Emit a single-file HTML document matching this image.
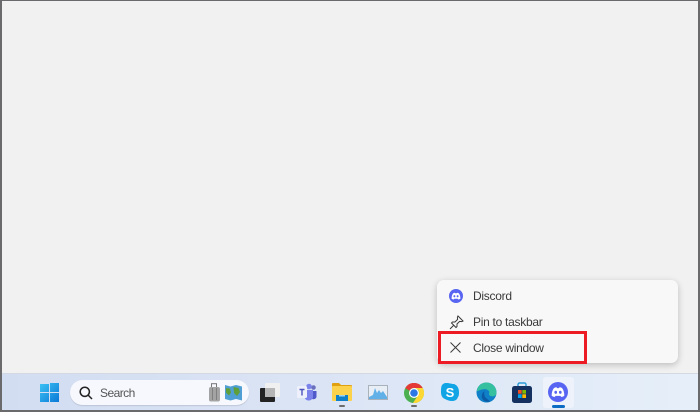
<!DOCTYPE html>
<html><head><meta charset="utf-8">
<style>
html,body{margin:0;padding:0;width:700px;height:412px;overflow:hidden;background:#f1f1f1}
body{position:relative;font-family:"Liberation Sans",sans-serif}
.a{position:absolute}
.t{position:absolute;font-size:12px;letter-spacing:-.28px;color:#3a3a3a;white-space:nowrap;left:473px}
#w{position:absolute;left:0;top:0;width:700px;height:412px;filter:blur(.35px)}
</style></head><body>
<div id="w">
<div class="a" style="left:0;top:373px;width:700px;height:38px;background:linear-gradient(90deg,#d3ddf2 0,#dbe5f5 50%,#e6eff9 100%);border-top:1px solid #d4d8e2;box-sizing:border-box"></div>

<!-- Context menu -->
<div class="a" style="left:437px;top:280px;width:241px;height:83px;background:#f8f8f8;border-radius:7px;box-shadow:0 2px 7px rgba(0,0,0,.22)"></div>
<svg class="a" style="left:449px;top:289px" width="14" height="14" viewBox="0 0 14 14"><circle cx="7" cy="7" r="7" fill="#5865f2"/><path d="M2.6 9.7C2.5 7.5 3.2 5.4 4.2 4.2Q5.3 3.7 6 3.7L6.3 4.3H7.7L8 3.7Q8.7 3.7 9.8 4.2C10.8 5.4 11.5 7.5 11.4 9.7Q10.4 10.4 9.3 10.5L8.7 9.7H5.3L4.7 10.5Q3.6 10.4 2.6 9.7Z" fill="#fff"/><ellipse cx="5.4" cy="7.2" rx=".95" ry="1.1" fill="#5865f2"/><ellipse cx="8.6" cy="7.2" rx=".95" ry="1.1" fill="#5865f2"/></svg>
<div class="t" style="top:289px">Discord</div>
<svg class="a" style="left:449px;top:315px" width="15" height="15" viewBox="0 0 15 15" fill="none" stroke="#3a3a3a" stroke-width="1"><path d="M9 1L14 6L12.8 6.6L10.6 6.4L8 9L8 11.5L7 12.5L2.5 8L3.5 7L6 7L8.6 4.4L8.4 2.2Z"/><path d="M4.6 10.4L1 14"/></svg>
<div class="t" style="top:315px">Pin to taskbar</div>
<svg class="a" style="left:450px;top:342px" width="11" height="11" viewBox="0 0 11 11" stroke="#3a3a3a" stroke-width="1"><path d="M.5.5L10.5 10.5M10.5.5L.5 10.5"/></svg>
<div class="t" style="top:341px">Close window</div>
<div class="a" style="left:438px;top:331px;width:149px;height:33px;box-sizing:border-box;border:3px solid #ed1c24"></div>

<!-- Start -->
<svg class="a" style="left:40px;top:383px" width="19" height="19"><defs><linearGradient id="g" x1="0" y1="0" x2="1" y2="1"><stop offset="0" stop-color="#3cc3f5"/><stop offset="1" stop-color="#0a78d6"/></linearGradient></defs><path d="M0 1h9v8H0zM10 0h9v9h-9zM0 10h9v9H0zM10 10h9v9h-9z" fill="url(#g)"/></svg>

<!-- Search -->
<div class="a" style="left:70px;top:380px;width:179px;height:25px;background:#f6f8fd;border-radius:13px;box-shadow:0 1px 1px rgba(0,0,0,.12)"></div>
<svg class="a" style="left:79px;top:386px" width="14" height="14" fill="none" stroke="#222" stroke-width="1.5"><circle cx="5.8" cy="5.8" r="4.6"/><path d="M9 9L13 13"/></svg>
<div class="a" style="left:100px;top:386px;font-size:12px;letter-spacing:-.55px;color:#555">Search</div>
<svg class="a" style="left:209px;top:383px" width="34" height="19" viewBox="0 0 34 19"><rect x="2.5" y=".7" width="5" height="4" fill="none" stroke="#777" stroke-width="1"/><rect x="0" y="4" width="11" height="14.5" rx="2" fill="#a3a3a3"/><path d="M3.5 5v12M7.5 5v12" stroke="#7f7f7f"/><path d="M16 2l5.500 1.500 5.500-1.500 6 1.500v14l-6-1.500-5.500 1.500-5.500-1.500z" fill="#4f9fd4"/><path d="M17 5l4 .5 1 4-2 3-3-3zM24.500 4l5 1 1.500 4-3 4-3-3z" fill="#5f9f3a"/></svg>

<!-- Task view -->
<div class="a" style="left:265px;top:383px;width:15px;height:14px;background:#f0f0f0;border-radius:1px"></div>
<div class="a" style="left:260px;top:388px;width:15px;height:14px;background:#232323;border-radius:1px"></div>
<div class="a" style="left:265px;top:388px;width:10px;height:9px;background:#b5b5b5"></div>

<!-- Teams -->
<svg class="a" style="left:297px;top:383px" width="20" height="19" viewBox="0 0 20 19"><circle cx="16.500" cy="4.500" r="2.300" fill="#6a70bd"/><circle cx="12" cy="3.500" r="2.800" fill="#7b83eb"/><path d="M14 8h5.500v5.500a3 3 0 0 1-5 2z" fill="#5059c9"/><path d="M8 7h8v7.500a4.500 4.500 0 0 1-8 1z" fill="#7b83eb"/><rect x="0" y="3" width="10" height="12" rx="1.500" fill="#eef1fb"/><path d="M2.500 6.500h5M5 6.500v6" stroke="#4b53bc" stroke-width="1.400"/></svg>

<!-- Explorer -->
<svg class="a" style="left:332px;top:383px" width="20" height="18" viewBox="0 0 20 18"><path d="M0 1a1 1 0 0 1 1-1h6l2 2h10a1 1 0 0 1 1 1v2H0z" fill="#e0a010"/><rect y="3" width="20" height="15" rx="1" fill="#fcd14c"/><rect x="4" y="12" width="12" height="6" fill="#0f7fc9"/><rect x="7" y="12" width="6" height="1.500" fill="#9fd5f2"/></svg>
<div class="a" style="left:339px;top:405px;width:6px;height:2px;background:#6c6c6c;border-radius:1px"></div>

<!-- Photos -->
<svg class="a" style="left:368px;top:385px" width="20" height="15" viewBox="0 0 20 15"><rect x=".5" y=".5" width="19" height="14" fill="#e8eef5" stroke="#a9b1ba"/><path d="M1 12L5 10L7 3L9 8L11 5L13 8L15 6L19 12V14H1Z" fill="#62b0e8"/></svg>

<!-- Chrome -->
<svg class="a" style="left:404px;top:383px" width="20" height="20" viewBox="0 0 20 20"><circle cx="10" cy="10" r="10" fill="#4caf50"/><path d="M1.300 5A10 10 0 0 1 18.700 5H10A5 5 0 0 0 5.600 7.700z" fill="#e53935"/><path d="M18.700 5A10 10 0 0 1 9 20L13.900 12.500A5 5 0 0 0 14 6.500L10 5z" fill="#fdd835"/><circle cx="10" cy="10" r="5" fill="#fff"/><circle cx="10" cy="10" r="3.800" fill="#2b78e4"/></svg>
<div class="a" style="left:411px;top:405px;width:6px;height:2px;background:#6c6c6c;border-radius:1px"></div>

<!-- Skype -->
<svg class="a" style="left:441px;top:383px" width="18" height="18" viewBox="0 0 18 18"><path d="M5 0C9 0 10 1 13 1C16 2 18 5 18 9C18 11 18 13 17 14C16 17 14 18 11 18C8 18 6 17 4 16C1 15 0 12 0 9C0 6 0 4 1 2C2 1 3 0 5 0Z" fill="#12a5e6"/><text x="9" y="14" text-anchor="middle" font-family="Liberation Sans" font-weight="bold" font-size="13" fill="#fff">S</text></svg>

<!-- Edge -->
<svg class="a" style="left:476px;top:382px" width="21" height="21" viewBox="0 0 21 21"><circle cx="10.500" cy="10.500" r="10" fill="#0f7fc7"/><path d="M.8 9C2 3 6 .5 10.500 .5C16 .5 20.500 5 20.500 11C20.500 14 17 15 14.500 14C12.500 13 13 11 13.500 10C12.500 7.500 9 6.500 6 7.500C3.500 8 1.500 9.500 .8 9Z" fill="#35c1a0"/><path d="M14 19.500C10 20.500 6.500 18.500 5.800 15C5.500 12.500 7 10 8.500 9C7.800 11.500 8 15 11 16.800Z" fill="#0c59a4"/></svg>

<!-- Store -->
<svg class="a" style="left:512px;top:382px" width="20" height="21" viewBox="0 0 20 21"><path d="M6 4V2.500A1.500 1.500 0 0 1 7.500 1h5A1.500 1.500 0 0 1 14 2.500V4" fill="none" stroke="#2a9ad6" stroke-width="1.400"/><rect y="4" width="20" height="17" rx="2.500" fill="#14315f"/><rect x="6" y="8" width="3.700" height="3.700" fill="#f25022"/><rect x="10.300" y="8" width="3.700" height="3.700" fill="#7fba00"/><rect x="6" y="12.300" width="3.700" height="3.700" fill="#00a4ef"/><rect x="10.300" y="12.300" width="3.700" height="3.700" fill="#ffb900"/></svg>

<!-- Discord active -->
<div class="a" style="left:543px;top:377px;width:31px;height:31px;background:#eef3fb;border-radius:3px"></div>
<svg class="a" style="left:548px;top:382px" width="20" height="20" viewBox="0 0 14 14"><circle cx="7" cy="7" r="7" fill="#5865f2"/><path d="M2.600 9.700C2.500 7.500 3.200 5.400 4.200 4.200Q5.300 3.700 6 3.700L6.300 4.300H7.700L8 3.700Q8.700 3.700 9.800 4.200C10.800 5.400 11.500 7.500 11.400 9.700Q10.400 10.400 9.300 10.500L8.700 9.700H5.300L4.700 10.500Q3.600 10.400 2.600 9.700Z" fill="#fff"/><ellipse cx="5.400" cy="7.200" rx=".95" ry="1.100" fill="#5865f2"/><ellipse cx="8.600" cy="7.200" rx=".95" ry="1.100" fill="#5865f2"/></svg>
<div class="a" style="left:552px;top:405px;width:13px;height:3px;background:#0c6cc4;border-radius:2px"></div>
</div>
<div class="a" style="left:0;top:0;width:700px;height:412px;box-sizing:border-box;border:solid #6a6a6c;border-width:1.5px 2px 2px 2px"></div>
</body></html>
